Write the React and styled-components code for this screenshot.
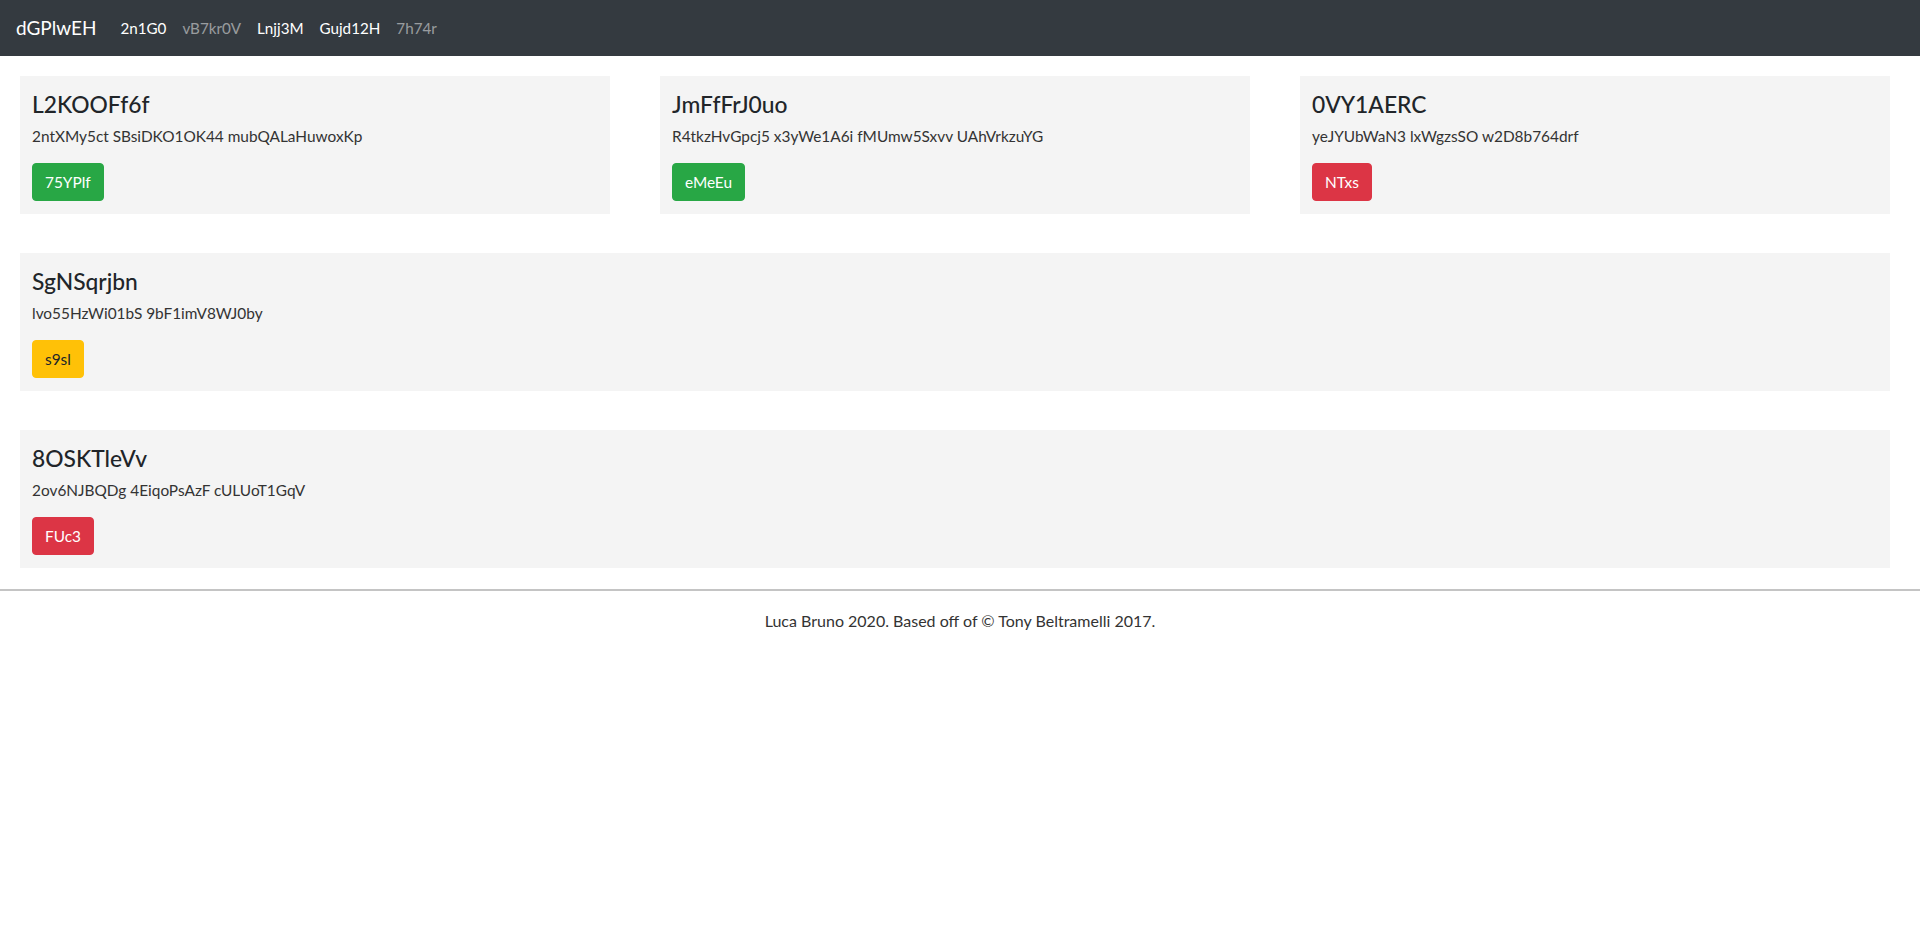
import React from "react";
import styled, { createGlobalStyle } from "styled-components";

const GlobalStyle = createGlobalStyle`
  html, body {
    margin: 0;
    padding: 0;
    background: #fff;
  }
  body {
    font-family: Lato, "Open Sans", "Liberation Sans", sans-serif;
    font-size: 16px;
    line-height: 1.5;
    color: #212529;
  }
  * {
    box-sizing: border-box;
  }
`;

const Navbar = styled.nav`
  display: flex;
  align-items: center;
  height: 56px;
  padding: 8px 16px;
  background: #343a40;
`;

const Brand = styled.a`
  font-size: 19px;
  line-height: 30px;
  padding: 5px 0;
  margin-right: 16px;
  color: #fff;
  text-decoration: none;
`;

const NavList = styled.ul`
  display: flex;
  list-style: none;
  margin: 0;
  padding: 0;
`;

const NavLink = styled.a`
  display: block;
  padding: 8px;
  font-size: 15.2px;
  line-height: 24px;
  color: ${(props) => (props.active ? "#fff" : "rgba(255, 255, 255, 0.5)")};
  text-decoration: none;
`;

const Main = styled.main`
  display: flex;
  flex-direction: column;
  gap: 39px;
  padding: 20px 30px 0 20px;
`;

const Row = styled.div`
  display: grid;
  grid-template-columns: ${(props) => (props.cols > 1 ? `repeat(${props.cols}, 1fr)` : "1fr")};
  column-gap: 50px;
`;

const Card = styled.div`
  background: #f4f4f4;
  padding: 12px 12px 11px;
  height: 138px;
`;

const Title = styled.h4`
  margin: 2px 0 6px;
  font-size: 22.8px;
  font-weight: 500;
  line-height: 28px;
  color: #212529;
`;

const Text = styled.p`
  margin: 0 0 15px;
  font-size: 15.4px;
  line-height: 24px;
  color: #333;
`;

const colors = {
  success: { bg: "#28a745", fg: "#fff" },
  danger: { bg: "#dc3545", fg: "#fff" },
  warning: { bg: "#ffc107", fg: "#212529" },
};

const Button = styled.button`
  display: inline-block;
  height: 38px;
  padding: 6px 12px;
  border: 1px solid ${(props) => colors[props.variant].bg};
  border-radius: 4px;
  background: ${(props) => colors[props.variant].bg};
  color: ${(props) => colors[props.variant].fg};
  font-family: inherit;
  font-size: 15.4px;
  line-height: 24px;
  cursor: pointer;
`;

const Divider = styled.hr`
  margin: 21px 0 0;
  border: 0;
  border-top: 2px solid #c4c4c4;
`;

const Footer = styled.footer`
  padding-top: 18px;
  text-align: center;
  font-size: 16px;
  line-height: 24px;
  color: #333;
`;

const links = [
  { title: "2n1G0", active: true },
  { title: "vB7kr0V", active: false },
  { title: "Lnjj3M", active: true },
  { title: "Gujd12H", active: true },
  { title: "7h74r", active: false },
];

const rows = [
  [
    { title: "L2KOOFf6f", text: "2ntXMy5ct SBsiDKO1OK44 mubQALaHuwoxKp", button: "75YPlf", variant: "success" },
    { title: "JmFfFrJ0uo", text: "R4tkzHvGpcj5 x3yWe1A6i fMUmw5Sxvv UAhVrkzuYG", button: "eMeEu", variant: "success" },
    { title: "0VY1AERC", text: "yeJYUbWaN3 lxWgzsSO w2D8b764drf", button: "NTxs", variant: "danger" },
  ],
  [{ title: "SgNSqrjbn", text: "lvo55HzWi01bS 9bF1imV8WJ0by", button: "s9sl", variant: "warning" }],
  [{ title: "8OSKTleVv", text: "2ov6NJBQDg 4EiqoPsAzF cULUoT1GqV", button: "FUc3", variant: "danger" }],
];

const App = () => {
  return (
    <>
      <GlobalStyle />
      <Navbar>
        <Brand href="#">dGPlwEH</Brand>
        <NavList>
          {links.map((link) => (
            <li key={link.title}>
              <NavLink href="#" active={link.active ? 1 : 0}>
                {link.title}
              </NavLink>
            </li>
          ))}
        </NavList>
      </Navbar>
      <Main>
        {rows.map((row, index) => (
          <Row key={index} cols={row.length}>
            {row.map((card) => (
              <Card key={card.title}>
                <Title>{card.title}</Title>
                <Text>{card.text}</Text>
                <Button variant={card.variant}>{card.button}</Button>
              </Card>
            ))}
          </Row>
        ))}
      </Main>
      <Divider />
      <Footer>Luca Bruno 2020. Based off of © Tony Beltramelli 2017.</Footer>
    </>
  );
};

export default App;
